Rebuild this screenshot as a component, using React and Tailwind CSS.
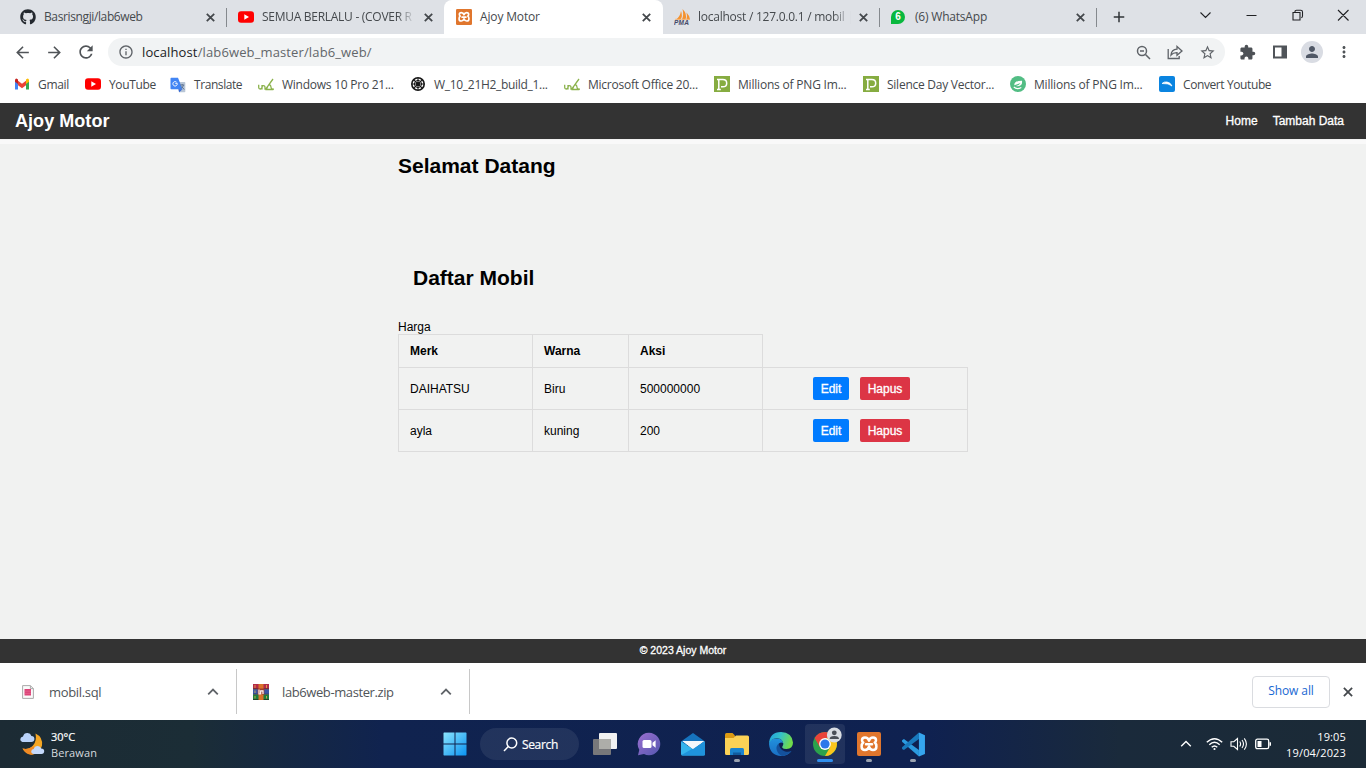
import React from "react";
import { FaGithub } from "react-icons/fa";
import {
  MdExtension, MdStarBorder, MdPerson, MdMoreVert, MdRefresh, MdArrowBack, MdArrowForward, MdInfoOutline, MdAdd,
} from "react-icons/md";

const UI = "font-['Open_Sans','Noto_Sans',sans-serif]";
const ARIAL = "font-['Liberation_Sans',Arial,sans-serif]";

const YouTube = () => (
  <svg width="16" height="16" viewBox="0 0 16 16">
    <rect x="0" y="2.2" width="16" height="11.6" rx="3" fill="#f00" />
    <path d="M6.3 5.3v5.4L11 8z" fill="#fff" />
  </svg>
);

const XamppMark = ({ size }) => (
  <svg width={size} height={size} viewBox="0 0 24 24">
    <rect width="24" height="24" rx="2" fill="#e0762d" />
    <path
      d="M6.300 10.500Q5 9.800 5 8.300 5 5.500 8 5.500t4 3.200q1-3.200 4-3.200t3 2.800q0 1.500-1.300 2.200M6.300 10.500Q4.600 11.800 4.600 14.500 4.600 18 8 18q3 0 4-3.300 1 3.300 4 3.300 3.400 0 3.400-3.500 0-2.700-1.700-4M9 12.300h6"
      fill="none" stroke="#fff" strokeWidth="2.500" strokeLinejoin="round" strokeLinecap="round"
    />
  </svg>
);

const Pma = () => (
  <svg width="17" height="16" viewBox="0 0 17 16">
    <path d="M2 10.500Q6 8 7 2q2 5-.5 8.500zM8 10.500Q10 6 8.500 0q5 5 3 10.500zM12.500 10.500q1-3.500 0-7 3 3 3.500 7z" fill="#f5922f" />
    <path d="M1 10.300h15" stroke="#f9b36a" strokeWidth=".8" />
    <text x="0" y="15.800" fontSize="6.500" fontWeight="bold" fontStyle="italic" fontFamily="Liberation Sans" fill="#444a68" textLength="15">PMA</text>
  </svg>
);

const WhatsApp = () => (
  <span className="flex size-[14px] items-center justify-center rounded-full rounded-bl-[3px] bg-[#09b83e]">
    <span className="font-['Liberation_Sans',sans-serif] text-[10px] leading-none font-bold text-white">6</span>
  </span>
);

const Gmail = () => (
  <svg width="16" height="16" viewBox="0 0 16 16">
    <path d="M1 13.500V4l3 2.300v7.200z" fill="#4285f4" />
    <path d="M12 13.500V6.300L15 4v9.500z" fill="#34a853" />
    <path d="M4 9.300V4.700l4 3 4-3v4.600l-4 3z" fill="#ea4335" />
    <path d="M1 4.200Q1 2.500 2.500 2.500L4 3.600v4.300L1 5.700z" fill="#c5221f" />
    <path d="M15 4.200q0-1.700-1.500-1.700L12 3.600v4.300l3-2.200z" fill="#fbbc04" />
  </svg>
);

const Translate = () => (
  <svg className="mt-0.5" width="16" height="16" viewBox="0 0 16 16">
    <path d="M6 5h8.500q.8 0 .8.800V14.500q0 .8-.8.800H9z" fill="#b9c6d6" />
    <path d="M1.300.7H8l4.500 11.500H1.300q-.8 0-.8-.8v-10q0-.7.800-.7z" fill="#4285f4" />
    <path d="M8.500 12.200h4L9.200 15.300z" fill="#3367d6" />
    <path d="M7.500 6.300H5.300M7.300 6.800a2.200 2.200 0 1 1-.8-1.700" stroke="#fff" strokeWidth="1" fill="none" />
    <path d="M10.200 8h4M12.200 7v1M13.500 8q-.5 2-2.500 3.500M11.700 9.500l2.500 3" stroke="#5f7391" strokeWidth="1" fill="none" />
  </svg>
);

const Uk = () => (
  <svg width="17" height="16" viewBox="0 0 17 16" fill="none" stroke="#8bb24c" strokeWidth="1.300">
    <path d="M.7 8.800v2.700q0 1.500 1.500 1.500T4 11.500V9M4 13.500v-2q0-1.800 1.500-1.800T7 11.500v2.200M7.500 13.300 15 3M10.200 9.500q2-1.500 2.500.500.200 2.800 1.800 3.200h1.500M9.800 10.200l-1.500 3.300h7" />
  </svg>
);

const Wheel = () => (
  <svg width="16" height="16" viewBox="0 0 16 16" fill="none" stroke="#161616">
    <circle cx="8" cy="8" r="6.200" strokeWidth="1.600" />
    <path d="M8 2v12M2 8h12M3.800 3.800l8.400 8.400M12.200 3.800l-8.400 8.400" strokeWidth="1.100" />
    <circle cx="8" cy="8" r="3.600" strokeWidth="1" />
    <circle cx="8" cy="8" r="1.500" fill="#161616" />
  </svg>
);

const PngTree = () => (
  <svg width="16" height="16" viewBox="0 0 16 16">
    <rect width="16" height="16" fill="#86ac41" />
    <path d="M3 3.500h1.800v10M3 13.500h3.800M4.800 3.600h4Q12.700 3.600 12.700 7.200T8.800 10.800H7" fill="none" stroke="#fff" strokeWidth="1.500" />
  </svg>
);

const GreenDisc = () => (
  <svg width="16" height="16" viewBox="0 0 16 16">
    <circle cx="8" cy="8" r="8" fill="#52bd84" />
    <path d="M4.300 9.300Q4 4.700 12 4.700q.8 5-4 5.500L5.500 10Q9 9.500 10.500 7z" fill="#fff" />
    <path d="M3.800 11q3 3 7.500.5" fill="none" stroke="#fff" strokeWidth="1.100" />
  </svg>
);

const BlueBird = () => (
  <svg width="16" height="16" viewBox="0 0 16 16">
    <rect width="16" height="16" rx="2" fill="#0a84e0" />
    <path d="M3 7.500q2-2 5-1.500 3.500.5 5 4-3-3-10-2.500z" fill="#fff" stroke="#fff" strokeWidth=".8" />
  </svg>
);

const Cross = ({ size = 9, w = 1.8 }) => (
  <svg className="shrink-0" width={size} height={size} viewBox="0 0 9 9" stroke="#44484c" strokeWidth={w}>
    <path d="M.8.800l7.400 7.400M8.200.800.800 8.200" />
  </svg>
);

const Tab = ({ icon, label, w, labelW, fade, pad = "pl-5" }) => (
  <div className={`flex h-[34px] shrink-0 items-center pr-[2px] ${pad} ${w}`}>
    <span className="flex w-6 shrink-0 items-center">{icon}</span>
    <span className={`${labelW} shrink-0 whitespace-nowrap ${fade ? "[mask-image:linear-gradient(to_right,black_88%,transparent)]" : ""}`}>{label}</span>
    <span className="ml-auto"><Cross /></span>
  </div>
);

const Sep = () => <span className="h-[19px] w-px shrink-0 bg-[#85898e]" />;

const bookmarks = [
  ["Gmail", <Gmail />, "w-[71px]", "tracking-[-0.3px]", "w-6"],
  ["YouTube", <YouTube />, "w-[85px]", "tracking-[-0.35px]", "w-6"],
  ["Translate", <Translate />, "w-[88px]", "tracking-[-0.42px]", "w-6"],
  ["Windows 10 Pro 21...", <Uk />, "w-[152px]", "tracking-[-0.25px]", "w-6"],
  ["W_10_21H2_build_1...", <Wheel />, "w-[154px]", "tracking-[-0.3px]", "w-6"],
  ["Microsoft Office 20...", <Uk />, "w-[150px]", "tracking-[-0.25px]", "w-6"],
  ["Millions of PNG Im...", <PngTree />, "w-[149px]", "tracking-[-0.2px]", "w-6"],
  ["Silence Day Vector...", <PngTree />, "w-[147px]", "tracking-[-0.25px]", "w-6"],
  ["Millions of PNG Im...", <GreenDisc />, "w-[149px]", "tracking-[-0.2px]", "w-6"],
  ["Convert Youtube", <BlueBird />, "w-[120px]", "tracking-[-0.4px]", "w-6"],
];

const rows = [["DAIHATSU", "Biru", "500000000"], ["ayla", "kuning", "200"]];

const Actions = () => (
  <div className="flex flex-1 items-start gap-[11px] pt-[9px] pl-[50px] text-white">
    <button className="h-[23px] w-9 rounded-[2px] bg-[#007bff] [-webkit-text-stroke:0.3px_white]">Edit</button>
    <button className="h-[23px] w-[50px] rounded-[2px] bg-[#dc3545] [-webkit-text-stroke:0.3px_white]">Hapus</button>
  </div>
);

const Chevron = ({ c = "#5f6368", w = 1.8 }) => (
  <svg width="12" height="8" viewBox="0 0 12 8" fill="none" stroke={c} strokeWidth={w}>
    <path d="M1.200 6.300 6 1.600l4.800 4.700" />
  </svg>
);

const SqlFile = () => (
  <svg width="12" height="14" viewBox="0 0 12 14">
    <path d="M.6.600h7.800l3 3v9.800H.6z" fill="#fafafa" stroke="#aaa" />
    <path d="M8.400.600v3h3" fill="none" stroke="#aaa" />
    <path d="M2.500 4h6.500v6.500H2.500z" fill="#dd4478" />
    <path d="M2.500 6.200h6.500M2.500 8.400h6.500" stroke="#e983a5" strokeWidth=".4" />
  </svg>
);

const Rar = () => (
  <svg width="16" height="16" viewBox="0 0 16 16">
    <path d="M0 0h16v5H0z" fill="#b32b48" />
    <path d="M0 5.200h16v5H0z" fill="#3b56a8" />
    <path d="M0 10.500h16V16H0z" fill="#1e7d3c" />
    <path d="M0 5h16M0 10.300h16M0 15.600h16" stroke="#222" strokeWidth=".7" />
    <path d="M5.500 0h5v16h-5z" fill="#d9722b" />
    <path d="M4.700 4.500h6.600v6H4.700z" fill="#a13b2b" />
    <path d="M6 5.500V10h1.700V6.800H10V10" fill="none" stroke="#fff" strokeWidth="1.200" />
    <path d="M2 1v3M2 6.500v2.500M13.500 1v3M13.500 12v2.500M2 12v2.500" stroke="#e9b54a" strokeWidth=".8" />
  </svg>
);

const Weather = () => (
  <svg width="26" height="24" viewBox="0 0 26 24">
    <path d="M15.500 1.500Q23 5 22 13.500 20 22.500 11 22.500 5 21.500 2.500 16.500 9 18 13 13.500T15.500 1.500z" fill="#f5a623" />
    <path d="M2.500 16.500Q7 24 13 22.500q3-1 5-3l-5-5.500q-4 4-10.500 2.500z" fill="#f08a24" />
    <path d="M4 10Q.3 10 .3 7.200.3 4.800 3 4.400 4 .8 7.600 1q3 .2 3.800 3 3 .2 3 3 0 3-3.200 3z" fill="#b9d2fa" />
    <path d="M14 22q-2.800 0-2.800-2.400t2.500-2.600q.9-3 4-3 2.800 0 3.500 2.600 3 .2 3 2.700T21.500 22z" fill="#c4d9fb" />
  </svg>
);

const WinLogo = () => (
  <svg width="24" height="24" viewBox="0 0 24 24">
    <defs>
      <linearGradient id="win" x2="1" y2="1">
        <stop stopColor="#8be4fd" /><stop offset="1" stopColor="#0a93f2" />
      </linearGradient>
    </defs>
    <path d="M1 .5h10.500v11H.5V1zM12.500.500H23l.5.500v10.500h-11zM.5 12.500h11v11H1l-.5-.5zM12.500 12.500h11V23l-.5.500H12.500z" fill="url(#win)" />
  </svg>
);

const TaskView = () => (
  <svg width="24" height="22" viewBox="0 0 24 22">
    <rect x="6" y="0" width="18" height="16" rx="1" fill="#f1f1f1" />
    <rect x="0" y="6" width="18" height="16" rx="1" fill="#77777a" />
    <path d="M6 6h12v10H6z" fill="#adada9" />
  </svg>
);

const Chat = () => (
  <svg width="24" height="24" viewBox="0 0 24 24">
    <defs><linearGradient id="chat" x2="1" y2="1"><stop stopColor="#9b6fd0" /><stop offset="1" stopColor="#5558af" /></linearGradient></defs>
    <path d="M12 .8a11.200 11.200 0 1 1-5 21.200L1 23.200l1.300-5.500A11.200 11.200 0 0 1 12 .800z" fill="url(#chat)" />
    <rect x="5.500" y="8" width="9" height="8" rx="1.500" fill="#fff" />
    <path d="M15.500 10.800 18.600 8.300v7.400l-3.100-2.500z" fill="#fff" />
  </svg>
);

const Mail = () => (
  <svg width="26" height="24" viewBox="0 0 26 24">
    <path d="M1 9.500 13 1l12 8.500V13H1z" fill="#1673bd" />
    <path d="M2.500 9h21.500L13 17.500z" fill="#f3f7fb" />
    <path d="M1 9.500 13 17 25 9.500V22q0 1.500-1.500 1.500h-21Q1 23.500 1 22z" fill="#35b4ed" />
    <path d="M1.500 23 25 9.500V22q0 1.500-1.500 1.500h-21z" fill="#1f93dc" />
    <path d="M2.500 9h21.500L13 17z" fill="#f3f7fb" />
  </svg>
);

const Folder = () => (
  <svg width="26" height="24" viewBox="0 0 26 24">
    <path d="M1 2.500Q1 1 2.500 1h6L11 3.500V8H1z" fill="#dc9a12" />
    <path d="M1 6h8.500L12 3.500h11.500Q25 3.500 25 5v16.500q0 1.500-1.500 1.500h-21Q1 23 1 21.500z" fill="#fcd256" />
    <path d="M6 23v-5.500Q6 16 7.500 16h11q1.500 0 1.500 1.500V23z" fill="#1a83cf" />
    <path d="M9 23v-2.500h8V23z" fill="#105b9f" />
  </svg>
);

const Edge = () => (
  <svg width="26" height="26" viewBox="0 0 26 26">
    <defs>
      <linearGradient id="edgeTop" x2="1" y2=".3"><stop stopColor="#1f9fe0" /><stop offset=".5" stopColor="#35c1c8" /><stop offset="1" stopColor="#6fdc4c" /></linearGradient>
      <linearGradient id="edgeLow" x2="0" y2="1"><stop stopColor="#2191dd" /><stop offset="1" stopColor="#1a6fc4" /></linearGradient>
    </defs>
    <path d="M1 13Q1.500 7.500 9 7.500q5.500 0 6 4.500-2-1-4 .5-2 2-.5 6 2 4 7.500 3.800 3 0 5.500-2.300Q20 25 13 25 2 24.500 1 13z" fill="url(#edgeLow)" />
    <path d="M11 12.500Q8 14.500 8.500 18q.8 5 5.500 7 5.500-.3 9.500-5-3.500 1.500-7 .3-5.500-2.300-5.500-7.800z" fill="#14519c" />
    <path d="M1 13Q1.500 1 13 1q11 .5 12 10.500 0 6-6.500 6.500-3.500 0-4.300-1.500-.2-.7.500-1.500 1.300-2 0-4.500Q12.500 7 8.500 7.300 2.500 8 1 13z" fill="url(#edgeTop)" />
  </svg>
);

const Chrome = () => (
  <svg width="34" height="34" viewBox="0 0 34 34">
    <circle cx="17" cy="17" r="12" fill="#2ba24c" />
    <path d="M6.600 11A12 12 0 0 1 27.400 11L17 11.200 11.800 20z" fill="#e9433a" />
    <path d="M17 11.200h10.500A12 12 0 0 1 17 29l5.200-9z" fill="#fbc51b" />
    <circle cx="17" cy="17" r="5.900" fill="#fff" /><circle cx="17" cy="17" r="4.600" fill="#2d78ea" />
    <circle cx="26.300" cy="8" r="7.400" fill="#d9dde3" />
    <circle cx="26.300" cy="5.800" r="2.400" fill="#4a4f57" /><path d="M21.600 12q0-3 4.700-3t4.700 3z" fill="#4a4f57" />
  </svg>
);

const VsCode = () => (
  <svg width="25" height="25" viewBox="0 0 24 24">
    <path d="M2.800 6.700 1 7.800v1.500l16.200 14.200V17.300z" fill="#2b9be0" />
    <path d="M2.800 17.300 1 16.200v-1.500L17.200.500v6.200z" fill="#1879bd" />
    <path d="M17.200.500 23 3v18l-5.800 2.500z" fill="#35a5ee" />
  </svg>
);

const TaskItem = ({ children, mark, active }) => (
  <div className="relative flex h-10 w-11 shrink-0 items-center justify-center">
    {active && <span className="absolute inset-x-0.5 inset-y-0 rounded bg-white/8" />}
    <span className="relative">{children}</span>
    {mark && <span className="absolute bottom-0.5 h-[3px] w-1.5 rounded-full bg-[#9ba3b0]" />}
    {active && <span className="absolute bottom-0.5 h-[3px] w-4 rounded-full bg-[#2f8fee]" />}
  </div>
);

export default function App() {
  return (
    <div className={`flex h-[768px] w-[1366px] flex-col overflow-hidden bg-white ${UI}`}>
      <div className="flex h-[34px] shrink-0 items-center bg-[#dee1e6] text-[12px] text-[#45494d]">
        <Tab icon={<FaGithub className="size-4 text-[#24292f]" />} label="Basrisngji/lab6web" w="w-[217px]" labelW="w-[140px] tracking-[-0.38px]" />
        <span className="w-[9px] shrink-0" /><Sep />
        <Tab icon={<YouTube />} label="SEMUA BERLALU - (COVER R" w="w-[208px]" labelW="w-[153px] tracking-[-0.28px]" fade pad="pl-[11px]" />
        <span className="w-[9px] shrink-0" />
        <div className="flex h-full w-[219px] shrink-0 rounded-t-lg bg-white">
          <Tab icon={<XamppMark size={16} />} label="Ajoy Motor" w="w-[209px]" labelW="w-[140px] tracking-[-0.15px]" pad="pl-3" />
        </div>
        <Tab icon={<Pma />} label="localhost / 127.0.0.1 / mobil |" w="w-[207px]" labelW="w-[153px] tracking-[-0.25px]" fade pad="pl-[11px]" />
        <span className="w-[9px] shrink-0" /><Sep />
        <Tab icon={<WhatsApp />} label="(6) WhatsApp" w="w-[207px]" labelW="w-[140px] tracking-[-0.2px]" pad="pl-[11px]" />
        <span className="w-[9px] shrink-0" /><Sep />
        <MdAdd className="ml-[13px] size-[18px] text-[#303438]" stroke="currentColor" strokeWidth="0" />
        <div className="mb-1 ml-auto flex items-center pr-[17px]">
          <svg width="150" height="14" viewBox="0 0 150 14" fill="none" stroke="#202124" strokeWidth="1.100">
            <path d="M1.500 4.500 6.500 9.500l5-5M47.500 7.500h10M94 4.500h7v7.500h-7zM96 4.500V3.500Q96 2.300 97.500 2.300h4.300q1.700 0 1.700 1.700v4q0 1.500-1.200 1.700M139 2l10.500 10.500M149.500 2 139 12.500" />
          </svg>
        </div>
      </div>

      <div className="flex h-9 shrink-0 items-center">
        <MdArrowBack className="ml-[13px] size-[19px] text-[#505458]" />
        <MdArrowForward className="ml-[13px] size-[19px] text-[#505458]" />
        <MdRefresh className="ml-[12px] size-5 text-[#505458]" />
        <div className="ml-3 flex h-7 w-[1117px] items-center rounded-full bg-[#f1f3f4] pl-2.5">
          <MdInfoOutline className="size-4 text-[#5f6368]" />
          <span className="mt-0.5 ml-2 text-[13px] tracking-[0.13px] text-[#62666a]"><span className="text-[#202124]">localhost</span>/lab6web_master/lab6_web/</span>
          <div className="ml-auto flex items-center gap-4 pr-[9px] text-[#5f6368]">
            <svg width="15" height="15" viewBox="0 0 15 15" fill="none" stroke="currentColor" strokeWidth="1.500">
              <circle cx="6" cy="6" r="4.500" /><path d="m9.500 9.500 4.500 4.500M4 6h4" />
            </svg>
            <svg width="16" height="16" viewBox="0 0 16 16" fill="none" stroke="currentColor" strokeWidth="1.300">
              <path d="M1.200 5v9.500h11V12M4 11Q4.500 5.500 10 5.200V2.500l5 4.500-5 4.300V8.600Q6 8.500 4 11z" />
            </svg>
            <MdStarBorder className="size-[17px]" />
          </div>
        </div>
        <MdExtension className="ml-[14px] size-[17px] text-[#4d5156]" />
        <svg className="ml-4" width="16" height="16" viewBox="0 0 16 16"><path d="M1 1.500h14v13H1z" fill="#505459" /><path d="M3 3.500h6.500v9H3z" fill="#fff" /></svg>
        <span className="ml-[13px] flex size-[22px] items-center justify-center rounded-full bg-[#d9dce3]"><MdPerson className="size-[18px] text-[#505866]" /></span>
        <MdMoreVert className="ml-3 size-[18px] text-[#505458]" />
      </div>

      <div className="flex h-[33px] shrink-0 items-start pt-1.5 pl-[14px] text-[12px] text-[#44484c]">
        {bookmarks.map(([label, icon, w, tracking, iw], i) => (
          <div key={i} className={`flex h-4 shrink-0 items-center ${w}`}>
            <span className={`flex shrink-0 ${iw}`}>{icon}</span>
            <span className={`mt-px whitespace-nowrap ${tracking}`}>{label}</span>
          </div>
        ))}
      </div>

      <main className={`flex h-[560px] shrink-0 flex-col bg-[#f1f2f1] text-[12px] text-black ${ARIAL}`}>
        <header className="flex h-9 shrink-0 items-center bg-[#333] pr-[22px] pl-[15px] text-white">
          <h1 className="text-[18px] font-bold tracking-[0.05px]">Ajoy Motor</h1>
          <nav className="ml-auto flex gap-[15px] [-webkit-text-stroke:0.3px_white]"><a>Home</a><a>Tambah Data</a></nav>
        </header>
        <div className="mt-px h-1 shrink-0 bg-[#f9f9f9]" />
        <section className="ml-[398px] flex w-[570px] flex-col">
          <h2 className="mt-[9px] h-[26px] text-[21px] leading-[26px] font-bold">Selamat Datang</h2>
          <h2 className="mt-[86px] ml-[15px] h-[26px] text-[21px] leading-[26px] font-bold">Daftar Mobil</h2>
          <p className="mt-[29px] h-[14px] leading-[14px]">Harga</p>
          <div className="flex h-[33px] w-[365px] border-t border-r border-[#dcdcdc] font-bold">
            <div className="flex w-[134px] items-center border-l border-[#dcdcdc] pl-[11px]">Merk</div>
            <div className="flex w-24 items-center border-l border-[#dcdcdc] pl-[11px]">Warna</div>
            <div className="flex w-[134px] items-center border-l border-[#dcdcdc] pl-[11px]">Aksi</div>
          </div>
          {rows.map(([merk, warna, harga]) => (
            <div key={merk} className="flex h-[42px] border-t border-r border-[#dcdcdc]">
              <div className="flex w-[134px] items-center border-l border-[#dcdcdc] pl-[11px]">{merk}</div>
              <div className="flex w-24 items-center border-l border-[#dcdcdc] pl-[11px]">{warna}</div>
              <div className="flex w-[134px] items-center border-l border-[#dcdcdc] pl-[11px]">{harga}</div>
              <div className="flex flex-1 border-l border-[#dcdcdc]"><Actions /></div>
            </div>
          ))}
          <div className="h-px bg-[#dcdcdc]" />
        </section>
        <footer className="mt-auto flex h-6 items-center justify-center bg-[#333] text-[10.5px] text-white [-webkit-text-stroke:0.3px_white]">© 2023 Ajoy Motor</footer>
      </main>

      <div className="flex h-[57px] shrink-0 items-center text-[13px] text-[#505458]">
        <div className="flex h-[45px] w-[237px] items-center border-r border-[#c8c8c8] pr-[17px] pl-[22px]">
          <SqlFile /><span className="mt-0.5 ml-[15px] tracking-[-0.33px]">mobil.sql</span><span className="ml-auto"><Chevron /></span>
        </div>
        <div className="flex h-[45px] w-[233px] items-center border-r border-[#c8c8c8] pr-[17px] pl-4">
          <Rar /><span className="mt-0.5 ml-[13px] tracking-[-0.4px]">lab6web-master.zip</span><span className="ml-auto"><Chevron /></span>
        </div>
        <div className="ml-auto flex h-8 w-[78px] items-center justify-center rounded-[4px] border border-[#dadce0] pb-0.5 text-[12px] font-medium text-[#1967d2] tracking-[-0.1px]">Show all</div>
        <span className="mr-[13px] ml-[13px]"><Cross size={10} w={1.6} /></span>
      </div>

      <div className="flex h-12 shrink-0 items-center bg-[linear-gradient(to_right,#1c2b34_0%,#1b2d36_14%,#10234f_28%,#0f2150_68%,#1a2a3b_82%,#1b2a36_100%)] text-[11px] text-white">
        <div className="flex w-[432.500px] shrink-0 items-center pl-5">
          <Weather />
          <div className="mt-0.5 ml-[5px] leading-4"><div className="[-webkit-text-stroke:0.2px_white]">30°C</div><div className="text-[#d5dade] tracking-[0.1px]">Berawan</div></div>
        </div>
        <div className="flex w-[507.500px] shrink-0 items-center">
          <TaskItem><WinLogo /></TaskItem>
          <div className="ml-[3.500px] flex h-8 w-[99px] shrink-0 items-center rounded-full bg-white/8 pl-[23px]">
            <svg width="15" height="15" viewBox="0 0 15 15" fill="none" stroke="#fff" strokeWidth="1.500"><circle cx="8.800" cy="6" r="4.900" /><path d="M5.300 9.500 1 14" /></svg>
            <span className="mt-0.5 ml-1 text-[12px] tracking-[-0.35px] [-webkit-text-stroke:0.2px_white]">Search</span>
          </div>
          <span className="w-1 shrink-0" />
          <TaskItem><TaskView /></TaskItem>
          <TaskItem><Chat /></TaskItem>
          <TaskItem><Mail /></TaskItem>
          <TaskItem mark><Folder /></TaskItem>
          <TaskItem><Edge /></TaskItem>
          <TaskItem active><Chrome /></TaskItem>
          <TaskItem mark><XamppMark size={24} /></TaskItem>
          <TaskItem mark><VsCode /></TaskItem>
        </div>
        <div className="ml-auto flex items-center pr-5">
          <Chevron c="#fff" w={1.4} />
          <svg className="ml-3.5" width="17" height="14" viewBox="0 0 17 14" fill="none" stroke="#fff" strokeWidth="1.400">
            <path d="M.8 5.300Q8.500-2 16.200 5.300M3.300 7.800q5.200-5 10.400 0M5.700 10.200q2.800-2.600 5.600 0" /><circle cx="8.500" cy="12" r="1.100" fill="#fff" stroke="none" />
          </svg>
          <svg className="ml-[7px]" width="18" height="14" viewBox="0 0 18 14" fill="none" stroke="#fff" strokeWidth="1.100">
            <path d="M1 4.700h2.800L7.500 1.500v11L3.800 9.300H1zM9.700 4.500q1.800 2.500 0 5M12 3q3 4 0 8M14.300 1.300q4.200 5.700 0 11.400" />
          </svg>
          <svg className="ml-[7px]" width="17" height="12" viewBox="0 0 17 12"><rect x=".7" y="1.200" width="13" height="9.500" rx="1.700" fill="none" stroke="#fff" strokeWidth="1.300" /><path d="M2.500 3h4v6h-4zM14.500 4.200H16v3.500h-1.500z" fill="#fff" /></svg>
          <div className="mt-px ml-3.5 text-right leading-4 tracking-[0.15px]"><div>19:05</div><div>19/04/2023</div></div>
        </div>
      </div>
    </div>
  );
}
